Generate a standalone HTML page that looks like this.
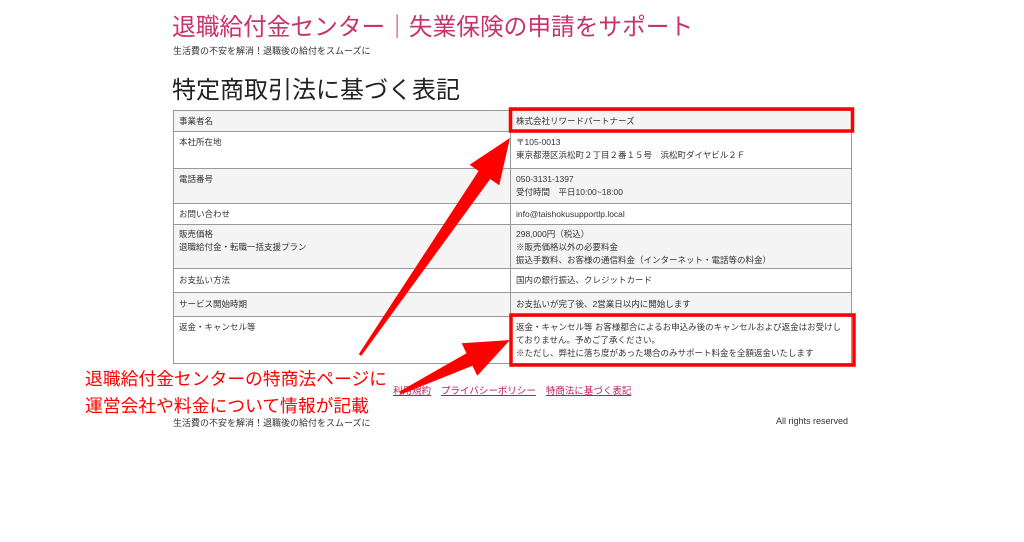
<!DOCTYPE html>
<html><head><meta charset="utf-8"><style>
body{margin:0;background:#fff;width:1024px;height:542px;position:relative;overflow:hidden;font-family:"Liberation Sans","Noto Sans CJK JP",sans-serif;color:#333}
.a{position:absolute;white-space:nowrap}
table{position:absolute;left:173px;top:110px;width:679px;border-collapse:collapse;font-size:8.5px;color:#333;table-layout:fixed}
td{border:1px solid #999;padding:4px 5px 0;vertical-align:top;line-height:13px;box-sizing:border-box;overflow:hidden;white-space:nowrap}
td:first-child{width:337px}
tr:nth-child(odd) td{background:#f4f4f4}
tr:nth-child(even) td{background:#fff}
.lk a{color:#c2185b;text-decoration:underline;margin-right:10px}
</style></head><body>
<div class="a" style="left:172px;top:8px;font-size:23.7px;color:#c8336a">退職給付金センター｜失業保険の申請をサポート</div>
<div class="a" style="left:173px;top:44px;font-size:9px">生活費の不安を解消！退職後の給付をスムーズに</div>
<div class="a" style="left:172px;top:70px;font-size:24px;color:#222">特定商取引法に基づく表記</div>
<table>
<tr style="height:21px"><td>事業者名</td><td>株式会社リワードパートナーズ</td></tr>
<tr style="height:37px"><td>本社所在地</td><td>〒105-0013<br>東京都港区浜松町２丁目２番１５号　浜松町ダイヤビル２Ｆ</td></tr>
<tr style="height:35px"><td>電話番号</td><td>050-3131-1397<br>受付時間　平日10:00~18:00</td></tr>
<tr style="height:21px"><td>お問い合わせ</td><td>info@taishokusupportlp.local</td></tr>
<tr style="height:44px"><td style="padding-top:3px">販売価格<br>退職給付金・転職一括支援プラン</td><td style="padding-top:3px">298,000円（税込）<br>※販売価格以外の必要料金<br>振込手数料、お客様の通信料金（インターネット・電話等の料金）</td></tr>
<tr style="height:24px"><td style="padding-top:5px">お支払い方法</td><td style="padding-top:5px">国内の銀行振込、クレジットカード</td></tr>
<tr style="height:24px"><td style="padding-top:5px">サービス開始時期</td><td style="padding-top:5px">お支払いが完了後、2営業日以内に開始します</td></tr>
<tr style="height:47px"><td style="padding-top:4px">返金・キャンセル等</td><td style="padding-top:4px">返金・キャンセル等 お客様都合によるお申込み後のキャンセルおよび返金はお受けし<br>ておりません。予めご了承ください。<br>※ただし、弊社に落ち度があった場合のみサポート料金を全額返金いたします</td></tr>
</table>
<div class="a lk" style="left:393px;top:383px;font-size:9.5px"><a>利用規約</a><a>プライバシーポリシー</a><a>特商法に基づく表記</a></div>
<div class="a" style="left:173px;top:416px;font-size:9px">生活費の不安を解消！退職後の給付をスムーズに</div>
<div class="a" style="left:776px;top:416px;font-size:9px">All rights reserved</div>
<svg class="a" style="left:0;top:0" width="1024" height="542">
<rect x="510.5" y="109" width="342" height="22" fill="none" stroke="#f00" stroke-width="3.5"/>
<rect x="511" y="315" width="343" height="50" fill="none" stroke="#f00" stroke-width="3.5"/>
<polygon fill="#f00" points="361.2,355.9 490.2,179 499.2,185.2 510,138 469.6,164.8 478.6,171 358.8,354.1"/>
<polygon fill="#f00" points="400.7,394.4 472.5,365.8 477.3,375.7 510,340 461.7,343.3 466.5,353.2 399.3,391.6"/>
</svg>
<div class="a" style="left:85px;top:366px;font-size:17.8px;color:#f00;line-height:27px">退職給付金センターの特商法ページに<br>運営会社や料金について情報が記載</div>
</body></html>
